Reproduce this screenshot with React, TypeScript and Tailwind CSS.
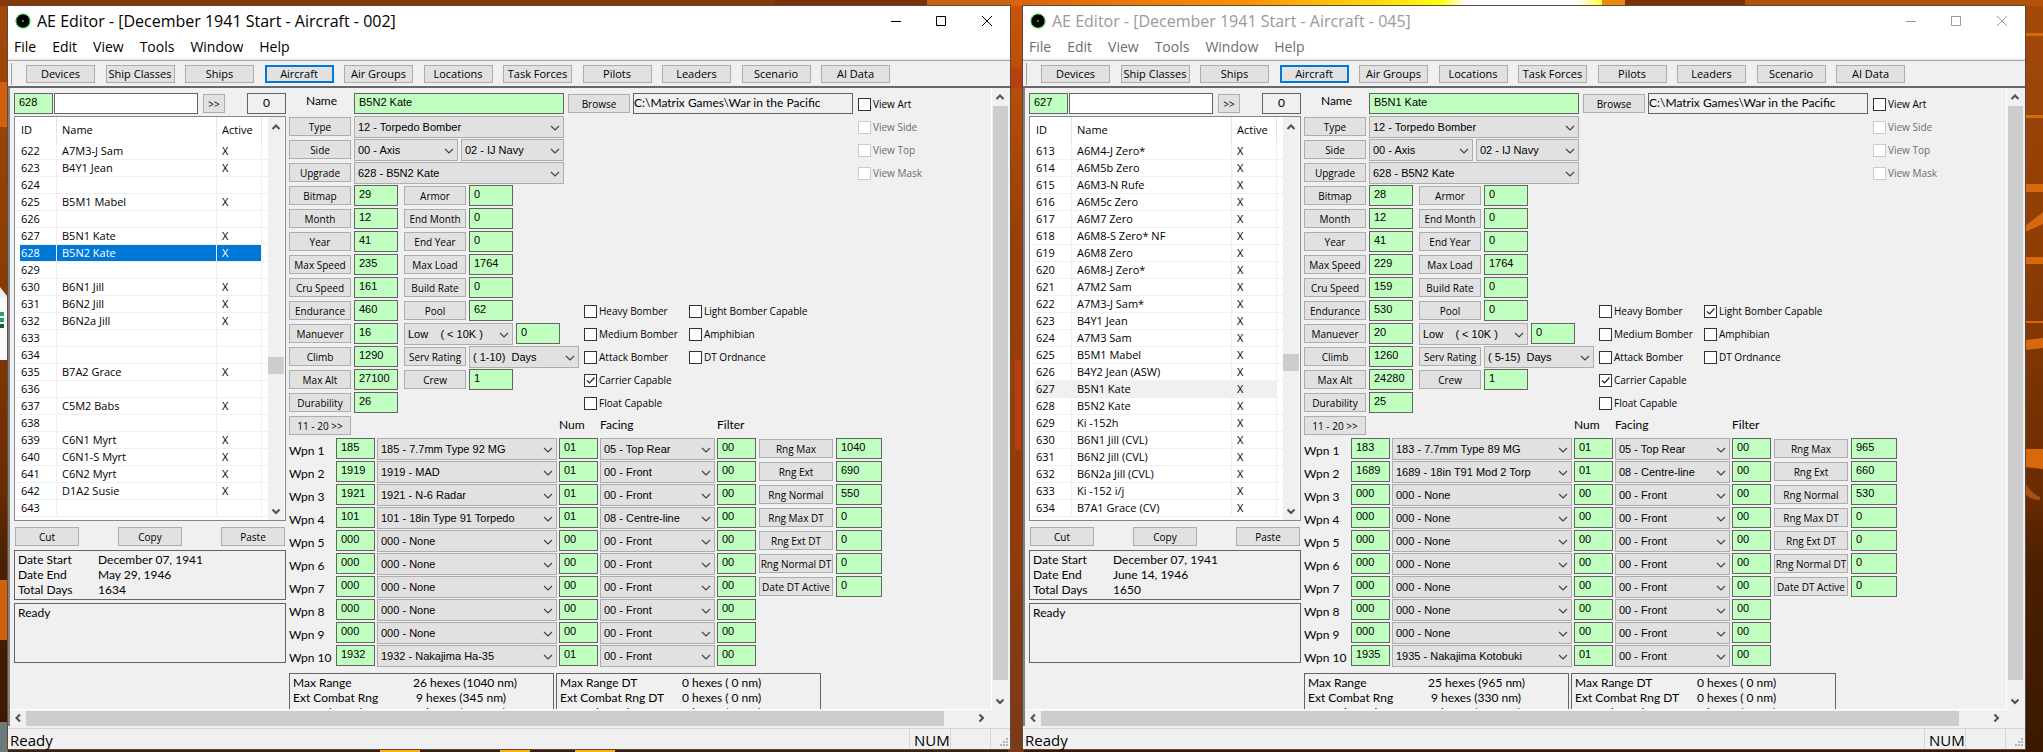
import type { ReactNode } from 'react'

type Weapon = [id: string, name: string, num: string, facing: string]

interface Aircraft {
  title: string
  focused: boolean
  id: string
  name: string
  bitmap: string
  speed: string
  cruise: string
  endurance: string
  maneuver: string
  climb: string
  maxAlt: string
  durability: string
  pool: string
  service: string
  lightBomber: boolean
  weapons: Weapon[]
  ranges: string[]
  dateEnd: string
  totalDays: string
  summary: string[]
  rows: [id: number, name: string][]
  thumb: string
}

const NONE: Weapon = ['000', '000 - None', '00', '00 - Front']

const windows: Aircraft[] = [
  {
    title: 'AE Editor - [December 1941 Start - Aircraft - 002]',
    focused: true,
    id: '628',
    name: 'B5N2 Kate',
    bitmap: '29',
    speed: '235',
    cruise: '161',
    endurance: '460',
    maneuver: '16',
    climb: '1290',
    maxAlt: '27100',
    durability: '26',
    pool: '62',
    service: '( 1-10)\u00a0\u00a0Days',
    lightBomber: false,
    weapons: [
      ['185', '185 - 7.7mm Type 92 MG', '01', '05 - Top Rear'],
      ['1919', '1919 - MAD', '01', '00 - Front'],
      ['1921', '1921 - N-6 Radar', '01', '00 - Front'],
      ['101', '101 - 18in Type 91 Torpedo', '01', '08 - Centre-line'],
      NONE, NONE, NONE, NONE, NONE,
      ['1932', '1932 - Nakajima Ha-35', '01', '00 - Front'],
    ],
    ranges: ['1040', '690', '550', '0', '0', '0', '0'],
    dateEnd: 'May 29, 1946',
    totalDays: '1634',
    summary: ['26 hexes (1040 nm)', '9 hexes (345 nm)', '7 hexes (275 nm)'],
    rows: [
      [622, 'A7M3-J Sam'], [623, 'B4Y1 Jean'], [624, ''], [625, 'B5M1 Mabel'], [626, ''],
      [627, 'B5N1 Kate'], [628, 'B5N2 Kate'], [629, ''], [630, 'B6N1 Jill'], [631, 'B6N2 Jill'],
      [632, 'B6N2a Jill'], [633, ''], [634, ''], [635, 'B7A2 Grace'], [636, ''],
      [637, 'C5M2 Babs'], [638, ''], [639, 'C6N1 Myrt'], [640, 'C6N1-S Myrt'], [641, 'C6N2 Myrt'],
      [642, 'D1A2 Susie'], [643, ''],
    ],
    thumb: 'mt-[225px]',
  },
  {
    title: 'AE Editor - [December 1941 Start - Aircraft - 045]',
    focused: false,
    id: '627',
    name: 'B5N1 Kate',
    bitmap: '28',
    speed: '229',
    cruise: '159',
    endurance: '530',
    maneuver: '20',
    climb: '1260',
    maxAlt: '24280',
    durability: '25',
    pool: '0',
    service: '( 5-15)\u00a0\u00a0Days',
    lightBomber: true,
    weapons: [
      ['183', '183 - 7.7mm Type 89 MG', '01', '05 - Top Rear'],
      ['1689', '1689 - 18in T91 Mod 2 Torp', '01', '08 - Centre-line'],
      NONE, NONE, NONE, NONE, NONE, NONE, NONE,
      ['1935', '1935 - Nakajima Kotobuki', '01', '00 - Front'],
    ],
    ranges: ['965', '660', '530', '0', '0', '0', '0'],
    dateEnd: 'June 14, 1946',
    totalDays: '1650',
    summary: ['25 hexes (965 nm)', '9 hexes (330 nm)', '7 hexes (265 nm)'],
    rows: [
      [613, 'A6M4-J Zero*'], [614, 'A6M5b Zero'], [615, 'A6M3-N Rufe'], [616, 'A6M5c Zero'], [617, 'A6M7 Zero'],
      [618, 'A6M8-S Zero* NF'], [619, 'A6M8 Zero'], [620, 'A6M8-J Zero*'], [621, 'A7M2 Sam'], [622, 'A7M3-J Sam*'],
      [623, 'B4Y1 Jean'], [624, 'A7M3 Sam'], [625, 'B5M1 Mabel'], [626, 'B4Y2 Jean (ASW)'], [627, 'B5N1 Kate'],
      [628, 'B5N2 Kate'], [629, 'Ki -152h'], [630, 'B6N1 Jill (CVL)'], [631, 'B6N2 Jill (CVL)'], [632, 'B6N2a Jill (CVL)'],
      [633, 'Ki -152 i/j'], [634, 'B7A1 Grace (CV)'],
    ],
    thumb: 'mt-[222px]',
  },
]

const menus = ['File', 'Edit', 'View', 'Tools', 'Window', 'Help']
const tabs = ['Devices', 'Ship Classes', 'Ships', 'Aircraft', 'Air Groups', 'Locations', 'Task Forces', 'Pilots', 'Leaders', 'Scenario', 'AI Data']
const rangeLabels = ['Rng Max', 'Rng Ext', 'Rng Normal', 'Rng Max DT', 'Rng Ext DT', 'Rng Normal DT', 'Date DT Active']
const summaryLabels = ['Max Range', 'Ext Combat Rng', 'Normal Combat Rng']

function Chevron({ dir, className = '' }: { dir: 'up' | 'down' | 'left' | 'right'; className?: string }) {
  const points = {
    up: '1.5,7 5,3.5 8.5,7',
    down: '1.5,3.5 5,7 8.5,3.5',
    left: '7,1.5 3.5,5 7,8.5',
    right: '3.5,1.5 7,5 3.5,8.5',
  }[dir]
  return (
    <svg viewBox="0 0 10 10" className={`h-2.5 w-2.5 shrink-0 ${className}`} fill="none" stroke="#505050" strokeWidth="2" aria-hidden="true">
      <polyline points={points} />
    </svg>
  )
}

function Btn({ children, width = 'w-[62px]' }: { children: ReactNode; width?: string }) {
  return (
    <button className={`mt-px h-[19px] shrink-0 border border-[#adadad] bg-[#e1e1e1] font-['Open_Sans',sans-serif] text-[10px] leading-4 whitespace-nowrap text-black ${width}`}>
      {children}
    </button>
  )
}

function Field({ label, value, width = 'w-11' }: { label: string; value: string; width?: string }) {
  return (
    <input
      aria-label={label}
      defaultValue={value}
      className={`h-[21px] shrink-0 border border-[#646464] bg-[#c0ffc0] pb-[3px] pl-1 text-[11px] text-black outline-none ${width}`}
    />
  )
}

function Select({ label, value, width }: { label: string; value: string; width: string }) {
  return (
    <div className={`relative h-[22px] shrink-0 ${width}`}>
      <select aria-label={label} className="block h-full w-full appearance-none border border-[#adadad] bg-[#e1e1e1] pl-[3px] text-[11px] text-black outline-none">
        <option>{value}</option>
      </select>
      <svg viewBox="0 0 10 10" className="pointer-events-none absolute top-[7px] right-1 h-2.5 w-2.5" fill="none" stroke="#444" strokeWidth="1.2" aria-hidden="true">
        <polyline points="1,3 5,7 9,3" />
      </svg>
    </div>
  )
}

function Check({ label, checked = false, disabled = false }: { label: string; checked?: boolean; disabled?: boolean }) {
  return (
    <label className={`mt-1 flex items-center gap-0.5 font-['Open_Sans',sans-serif] text-[10px] leading-[14px] whitespace-nowrap ${disabled ? 'text-[#6d6d6d]' : 'text-black'}`}>
      <span className="relative h-[13px] w-[13px] shrink-0">
        <input type="checkbox" defaultChecked={checked} disabled={disabled} className="peer block h-[13px] w-[13px] appearance-none border border-[#333] bg-white disabled:border-[#ccc]" />
        <svg viewBox="0 0 13 13" className="pointer-events-none absolute inset-0 hidden peer-checked:block" fill="none" stroke="#222" strokeWidth="1.2" aria-hidden="true">
          <polyline points="3,6.5 5.5,9 10.5,3.5" />
        </svg>
      </span>
      {label}
    </label>
  )
}

function Row({ children, checks }: { children?: ReactNode; checks?: [ReactNode, ReactNode?, ReactNode?] }) {
  return (
    <div className="flex h-[23px] items-start">
      <div className="flex w-[295px] shrink-0 items-start gap-[3px]">{children}</div>
      {checks && (
        <>
          <div className="w-[105px] shrink-0">{checks[0]}</div>
          <div className="w-[169px] shrink-0">{checks[1]}</div>
          <div className="shrink-0">{checks[2]}</div>
        </>
      )}
    </div>
  )
}

function Stat({ label, value }: { label: string; value: string }) {
  return (
    <>
      <Btn>{label}</Btn>
      <Field label={label} value={value} />
    </>
  )
}

function AircraftList({ data }: { data: Aircraft }) {
  return (
    <div className="mt-0.5 flex h-[405px] justify-between border border-[#828790] bg-white pr-px">
      <table className="w-[253px] table-fixed border-separate border-spacing-0 self-start text-left font-['Open_Sans',sans-serif] text-[11px] leading-4">
        <thead>
          <tr className="h-[26px]">
            <th className="w-[42px] border-r border-[#e5e5e5] pl-1.5 font-normal">ID</th>
            <th className="w-[160px] border-r border-[#e5e5e5] pl-[5px] font-normal">Name</th>
            <th className="w-[45px] border-r border-[#e5e5e5] pl-[5px] font-normal">Active</th>
            <th />
          </tr>
        </thead>
        <tbody>
          {data.rows.map(([id, name]) => {
            const current = String(id) === data.id
            const tone = !current ? '' : data.focused ? 'bg-[#0078d7] text-white' : 'bg-[#f0f0f0]'
            return (
              <tr key={id} className="h-[17px]">
                <td className={`border-r border-b border-l-[5px] border-[#f0f0f0] border-l-white p-0 pl-px ${tone}`}>{id}</td>
                <td className={`border-r border-b border-[#f0f0f0] p-0 pl-[5px] ${tone}`}>{name}</td>
                <td className={`border-r border-b border-[#f0f0f0] p-0 pl-[5px] ${tone}`}>{name && 'X'}</td>
                <td className="border-b border-[#f0f0f0] p-0" />
              </tr>
            )
          })}
        </tbody>
      </table>
      <div className="flex w-4 flex-col items-center bg-[#f0f0f0] py-1">
        <Chevron dir="up" className="mt-px" />
        <div className={`h-[17px] w-4 bg-[#cdcdcd] ${data.thumb}`} />
        <Chevron dir="down" className="mt-auto" />
      </div>
    </div>
  )
}

function SidePanel({ data }: { data: Aircraft }) {
  return (
    <div className="w-[272px] shrink-0">
      <div className="flex h-[21px]">
        <Field label="Aircraft ID" value={data.id} width="w-[39px]" />
        <input aria-label="Search" className="ml-px h-[21px] w-36 border border-[#646464] bg-white px-1 text-[11px] outline-none" />
        <button className="mt-px ml-[5px] h-[19px] w-[22px] border border-[#adadad] bg-[#e1e1e1] font-['Open_Sans',sans-serif] text-[10px] leading-4">&gt;&gt;</button>
        <output className="ml-auto h-[21px] w-[39px] border border-[#646464] text-center font-['Lato',sans-serif] text-xs leading-[17px]">0</output>
      </div>
      <AircraftList data={data} />
      <div className="mt-[5px] flex justify-between px-px">
        <Btn width="w-16">Cut</Btn>
        <Btn width="w-16">Copy</Btn>
        <Btn width="w-16">Paste</Btn>
      </div>
      <dl className="mt-1 grid h-[50px] grid-cols-[80px_1fr] content-start border border-[#646464] pt-px pl-[3px] font-['Lato',sans-serif] text-xs leading-[15px]">
        <dt>Date Start</dt>
        <dd>December 07, 1941</dd>
        <dt>Date End</dt>
        <dd>{data.dateEnd}</dd>
        <dt>Total Days</dt>
        <dd>{data.totalDays}</dd>
      </dl>
      <p className="mt-[3px] h-[60px] border border-[#646464] pt-px pl-[3px] font-['Lato',sans-serif] text-xs leading-[15px]">Ready</p>
    </div>
  )
}

function Summary({ rows, columns }: { rows: [string, string][]; columns: string }) {
  return (
    <dl className={`grid h-[66px] w-[265px] shrink-0 content-start border border-[#646464] pt-px pl-[3px] font-['Lato',sans-serif] text-xs leading-[15px] whitespace-nowrap ${columns}`}>
      {rows.map(([label, value], i) => (
        <div key={label} className="contents">
          <dt>{label}</dt>
          <dd className={value.startsWith('0') || i === 0 ? '' : 'pl-[3px]'}>{value}</dd>
        </div>
      ))}
    </dl>
  )
}

function Form({ data }: { data: Aircraft }) {
  return (
    <div className="ml-[3px] shrink-0">
      <div className="flex h-[23px] items-start">
        <label className="w-[65px] text-center font-['Lato',sans-serif] text-xs leading-4">Name</label>
        <Field label="Name" value={data.name} width="w-[210px]" />
        <div className="mr-[3px] ml-1 flex"><Btn>Browse</Btn></div>
        <p className="mr-[5px] h-[21px] w-[220px] overflow-hidden border border-[#646464] pt-px font-['Lato',sans-serif] text-xs leading-[15px]">
          C:\Matrix Games\War in the Pacific Admiral's Edition
        </p>
        <Check label="View Art" />
      </div>
      <Row checks={[null, null, <Check label="View Side" disabled />]}>
        <Btn>Type</Btn>
        <Select label="Type" value="12 - Torpedo Bomber" width="w-[210px]" />
      </Row>
      <Row checks={[null, null, <Check label="View Top" disabled />]}>
        <Btn>Side</Btn>
        <Select label="Side" value="00 - Axis" width="w-[104px]" />
        <Select label="Nationality" value="02 - IJ Navy" width="w-[103px]" />
      </Row>
      <Row checks={[null, null, <Check label="View Mask" disabled />]}>
        <Btn>Upgrade</Btn>
        <Select label="Upgrade" value="628 - B5N2 Kate" width="w-[210px]" />
      </Row>
      <Row><Stat label="Bitmap" value={data.bitmap} /><i className="w-0" /><Stat label="Armor" value="0" /></Row>
      <Row><Stat label="Month" value="12" /><i className="w-0" /><Stat label="End Month" value="0" /></Row>
      <Row><Stat label="Year" value="41" /><i className="w-0" /><Stat label="End Year" value="0" /></Row>
      <Row><Stat label="Max Speed" value={data.speed} /><i className="w-0" /><Stat label="Max Load" value="1764" /></Row>
      <Row><Stat label="Cru Speed" value={data.cruise} /><i className="w-0" /><Stat label="Build Rate" value="0" /></Row>
      <Row checks={[<Check label="Heavy Bomber" />, <Check label="Light Bomber Capable" checked={data.lightBomber} />]}>
        <Stat label="Endurance" value={data.endurance} /><i className="w-0" /><Stat label="Pool" value={data.pool} />
      </Row>
      <Row checks={[<Check label="Medium Bomber" />, <Check label="Amphibian" />]}>
        <Stat label="Manuever" value={data.maneuver} /><i className="w-0" />
        <Select label="Altitude band" value={'Low\u00a0\u00a0\u00a0\u00a0( < 10K )'} width="w-[109px]" />
        <Field label="Band value" value="0" />
      </Row>
      <Row checks={[<Check label="Attack Bomber" />, <Check label="DT Ordnance" />]}>
        <Stat label="Climb" value={data.climb} /><i className="w-0" />
        <Btn>Serv Rating</Btn>
        <Select label="Service rating" value={data.service} width="w-[110px]" />
      </Row>
      <Row checks={[<Check label="Carrier Capable" checked />]}>
        <Stat label="Max Alt" value={data.maxAlt} /><i className="w-0" /><Stat label="Crew" value="1" />
      </Row>
      <Row checks={[<Check label="Float Capable" />]}>
        <Stat label="Durability" value={data.durability} />
      </Row>
      <div className="flex h-[23px] items-start font-['Lato',sans-serif] text-xs leading-5">
        <Btn>11 - 20 &gt;&gt;</Btn>
        <span className="ml-52 w-[41px]">Num</span>
        <span className="w-[117px]">Facing</span>
        <span>Filter</span>
      </div>
      {data.weapons.map(([id, name, num, facing], i) => (
        <div key={i} className="flex h-[23px] items-start gap-0.5">
          <span className="w-[45px] font-['Lato',sans-serif] text-xs leading-[26px] whitespace-nowrap">Wpn {i + 1}</span>
          <Field label={`Weapon ${i + 1} ID`} value={id} width="w-[39px]" />
          <Select label={`Weapon ${i + 1}`} value={name} width="w-[180px]" />
          <Field label={`Weapon ${i + 1} count`} value={num} width="w-[39px]" />
          <Select label={`Weapon ${i + 1} facing`} value={facing} width="w-[115px]" />
          <Field label={`Weapon ${i + 1} filter`} value="00" width="w-[39px]" />
          {rangeLabels[i] && (
            <div className="ml-px flex gap-[3px]">
              <Btn width="w-[74px]">{rangeLabels[i]}</Btn>
              <Field label={rangeLabels[i]} value={data.ranges[i]} width="w-[46px]" />
            </div>
          )}
        </div>
      ))}
      <div className="mt-[5px] flex gap-0.5">
        <Summary columns="grid-cols-[120px_1fr]" rows={summaryLabels.map((l, i) => [l, data.summary[i]])} />
        <Summary columns="grid-cols-[122px_1fr]" rows={summaryLabels.map((l) => [`${l} DT`, '0 hexes ( 0 nm)'])} />
      </div>
    </div>
  )
}

function EditorWindow({ data }: { data: Aircraft }) {
  const { focused } = data
  return (
    <section className="flex min-w-0 flex-1 flex-col border border-[#5a4a40] bg-[#f0f0f0]">
      <header className={`flex h-[29px] shrink-0 items-center bg-white pl-[7px] font-['Open_Sans',sans-serif] ${focused ? 'text-black' : 'text-[#999]'}`}>
        <svg viewBox="0 0 16 16" className="h-4 w-4" aria-hidden="true">
          <circle cx="8" cy="8" r="7" fill="#000" stroke="#2fd43a" strokeWidth="1.3" strokeDasharray="2 1" />
          <circle cx="8" cy="8" r="1" fill="#2fd43a" />
        </svg>
        <h1 className="ml-1.5 text-base leading-7 whitespace-nowrap">{data.title}</h1>
        <div className="ml-auto flex">
          <button aria-label="Minimize" className="flex h-7 w-11 items-center justify-center">
            <svg viewBox="0 0 10 10" className="h-2.5 w-2.5" stroke="currentColor"><path d="M0 5.5H10" /></svg>
          </button>
          <button aria-label="Maximize" className="flex h-7 w-[46px] items-center justify-center">
            <svg viewBox="0 0 10 10" className="h-2.5 w-2.5" stroke="currentColor" fill="none"><path d="M.5 .5H9.5V9.5H.5Z" /></svg>
          </button>
          <button aria-label="Close" className="flex h-7 w-[46px] items-center justify-center">
            <svg viewBox="0 0 10 10" className="h-2.5 w-2.5" stroke="currentColor"><path d="M0 0L10 10M10 0L0 10" /></svg>
          </button>
        </div>
      </header>
      <nav className={`flex h-[25px] shrink-0 gap-4 border-b-2 border-[#f0f0f0] bg-white pl-1.5 font-['Open_Sans',sans-serif] text-sm leading-6 ${focused ? 'text-black' : 'text-[#6d6d6d]'}`}>
        {menus.map((m) => <button key={m}>{m}</button>)}
      </nav>
      <div className="flex h-7 shrink-0 border-t border-b-2 border-[#a0a0a0] border-b-[#696969]">
        <div className="mt-0.5 ml-[3px] h-[22px] w-px bg-[#a0a0a0]" />
        <div className="mt-1 ml-3.5 flex w-[864px] justify-between">
          {tabs.map((t) => (
            <button
              key={t}
              className={`h-[18px] w-[69px] bg-[#e1e1e1] font-['Open_Sans',sans-serif] text-[11px] leading-[14px] whitespace-nowrap ${t === 'Aircraft' ? 'border-2 border-[#0078d7]' : 'border border-[#adadad]'}`}
            >
              {t}
            </button>
          ))}
        </div>
      </div>
      <main className="flex min-h-0 flex-1 border-l-2 border-[#828282] pr-0.5">
        <div className="flex min-w-0 flex-1 overflow-hidden border-r border-b border-white pt-[5px] pl-1">
          <SidePanel data={data} />
          <Form data={data} />
        </div>
        <div className="flex w-4 shrink-0 flex-col items-center">
          <Chevron dir="up" className="my-1" />
          <div className="w-[15px] flex-1 bg-[#cdcdcd]" />
          <Chevron dir="down" className="mt-4 mb-1" />
        </div>
      </main>
      <div className="flex h-4 shrink-0 items-center border-l-2 border-[#828282] pr-6">
        <Chevron dir="left" className="mx-[3px]" />
        <div className="h-[15px] flex-1 bg-[#cdcdcd]" />
        <Chevron dir="right" className="ml-8" />
      </div>
      <footer className="mt-0.5 flex h-[21px] shrink-0 items-stretch border-t border-[#d7d7d7] pl-0.5 font-['Open_Sans',sans-serif] text-[15px] leading-[22px]">
        <span className="mr-auto">Ready</span>
        <span className="w-[42px] border-x border-[#d7d7d7] pl-1">NUM</span>
        <span className="w-10 border-r border-[#d7d7d7]" />
        <svg viewBox="0 0 19 20" className="h-5 w-[19px] self-end" fill="#b4b4b4" aria-hidden="true">
          <path d="M15 9h2v2h-2zM12 12h2v2h-2zM15 12h2v2h-2zM9 15h2v2H9zM12 15h2v2h-2zM15 15h2v2h-2z" />
        </svg>
      </footer>
    </section>
  )
}

// Wooden desktop showing round and between the windows
function Wallpaper() {
  return (
    <svg viewBox="0 0 2043 752" preserveAspectRatio="none" className="absolute inset-0 -z-10 h-full w-full" aria-hidden="true">
      <defs>
        <linearGradient id="wood" x1="0" y1="0" x2="0" y2="1">
          <stop offset="0" stopColor="#a34a0a" />
          <stop offset=".35" stopColor="#8c3c04" />
          <stop offset=".65" stopColor="#6a2c02" />
          <stop offset=".75" stopColor="#4a2000" />
          <stop offset="1" stopColor="#3a1800" />
        </linearGradient>
        <linearGradient id="glow">
          <stop offset="0" stopColor="#d8600a" />
          <stop offset=".4" stopColor="#ff9000" />
          <stop offset=".73" stopColor="#ffff10" />
          <stop offset=".77" stopColor="#ffffff" />
          <stop offset=".96" stopColor="#ffffff" />
          <stop offset="1" stopColor="#ffff30" />
        </linearGradient>
        <linearGradient id="gap" x1="0" y1="0" x2="0" y2="1">
          <stop offset="0" stopColor="#c85408" />
          <stop offset=".3" stopColor="#9a4004" />
          <stop offset=".7" stopColor="#943a06" />
          <stop offset="1" stopColor="#7a3a18" />
        </linearGradient>
      </defs>
      <rect width="2043" height="752" fill="url(#wood)" />
      <rect width="1010" height="6" fill="#843a08" />
      <rect x="775" width="155" height="6" fill="#7a3008" />
      <rect x="927" width="100" height="6" fill="#c8640c" />
      <rect x="1010" width="592" height="6" fill="url(#glow)" />
      <rect x="1602" width="23" height="6" fill="#e88a10" />
      <rect x="1625" width="120" height="6" fill="#7c3206" />
      <rect x="1745" width="298" height="6" fill="#b45208" />
      <rect x="1008" y="6" width="16" height="746" fill="url(#gap)" />
      <path d="M1010 68h14v20h-14zM1015 360h6v90h-6z" fill="#b84010" />
      <path d="M0 82h8v45H0zM0 580h8v60H0z" fill="#d2600c" />
      <path d="M0 287l7 9v2H0z" fill="#eee" />
      <path d="M0 298h8v62H0z" fill="#fafafa" />
      <path d="M0 312h4v4H0zM0 318h4v4H0z" fill="#21a366" />
      <path d="M0 324h4v4H0z" fill="#185c37" />
      <path d="M0 722h8v30H0z" fill="#6c7a78" />
      <g fill="#d8680c">
        <path d="M2025 33h18v3h-18zM2025 115h18v3h-18zM2025 184h18v8h-18zM2025 226l18-14v12l-18 8zM2025 257h18v7h-18zM2025 321h18v2h-18zM2025 340l18-2v10l-18 2zM2025 449h18v20l-18-2z" />
      </g>
      <path d="M2025 483q8 12 15 14v3q-10 0-15-6z" fill="#a85010" />
      <path d="M8 750h1000v2H8z" fill="#3a2010" />
      <path d="M500 750h30v2h-30zM575 750h40v2h-40zM380 750h40v2h-40z" fill="#ffb010" />
    </svg>
  )
}

export default function App() {
  return (
    <div className="relative isolate flex h-screen gap-[11px] overflow-hidden pt-[5px] pr-[17px] pb-0.5 pl-[7px] font-['Liberation_Sans',Arial,sans-serif] text-black">
      <Wallpaper />
      {windows.map((w) => <EditorWindow key={w.title} data={w} />)}
    </div>
  )
}
